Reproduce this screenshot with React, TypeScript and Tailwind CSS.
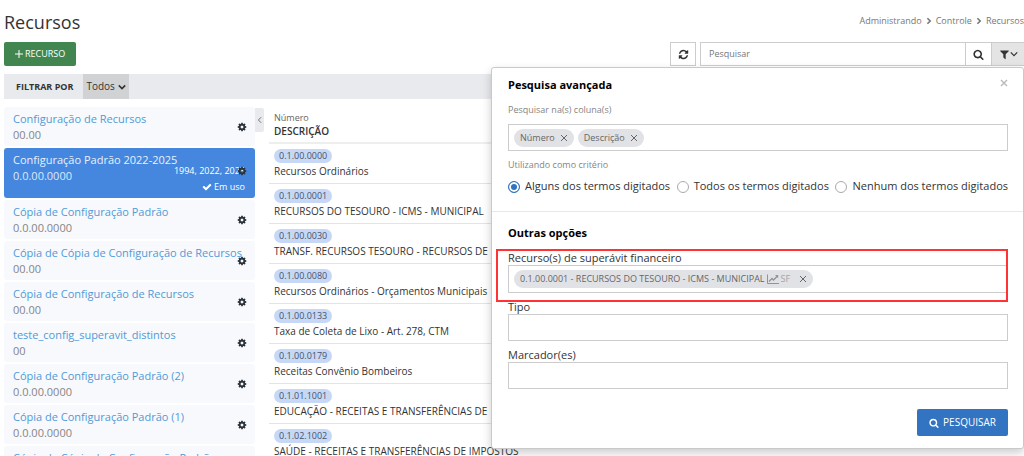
import { useState } from 'react';
import type { ReactNode } from 'react';
import { clsx } from 'clsx';

interface Config {
  name: string;
  mask: string;
  years?: string;
}

const CONFIGS: Config[] = [
  { name: 'Configuração de Recursos', mask: '00.00' },
  { name: 'Configuração Padrão 2022-2025', mask: '0.0.00.0000', years: '1994, 2022, 2023' },
  { name: 'Cópia de Configuração Padrão', mask: '0.0.00.0000' },
  { name: 'Cópia de Cópia de Configuração de Recursos', mask: '00.00' },
  { name: 'Cópia de Configuração de Recursos', mask: '00.00' },
  { name: 'teste_config_superavit_distintos', mask: '00' },
  { name: 'Cópia de Configuração Padrão (2)', mask: '0.0.00.0000' },
  { name: 'Cópia de Configuração Padrão (1)', mask: '0.0.00.0000' },
  { name: 'Cópia de Cópia de Configuração Padrão', mask: '0.0.00.0000' },
];

const RESOURCES = [
  { code: '0.1.00.0000', description: 'Recursos Ordinários' },
  { code: '0.1.00.0001', description: 'RECURSOS DO TESOURO - ICMS - MUNICIPAL' },
  { code: '0.1.00.0030', description: 'TRANSF. RECURSOS TESOURO - RECURSOS DE' },
  { code: '0.1.00.0080', description: 'Recursos Ordinários - Orçamentos Municipais' },
  { code: '0.1.00.0133', description: 'Taxa de Coleta de Lixo - Art. 278, CTM' },
  { code: '0.1.00.0179', description: 'Receitas Convênio Bombeiros' },
  { code: '0.1.01.1001', description: 'EDUCAÇÃO - RECEITAS E TRANSFERÊNCIAS DE' },
  { code: '0.1.02.1002', description: 'SAÚDE - RECEITAS E TRANSFERÊNCIAS DE IMPOSTOS' },
];

const CRITERIA = ['Alguns dos termos digitados', 'Todos os termos digitados', 'Nenhum dos termos digitados'];

const ICONS = {
  cog: 'M1152 896q0-106-75-181t-181-75-181 75-75 181 75 181 181 75 181-75 75-181zm512-109v222q0 12-8 23t-20 13l-185 28q-19 54-39 91 35 50 107 138 10 12 10 25t-9 23q-27 37-99 108t-94 71q-12 0-26-9l-138-108q-44 23-91 38-16 136-29 186-7 28-36 28h-222q-14 0-24.5-8.5t-11.5-21.5l-28-184q-49-16-90-37l-141 107q-10 9-25 9-14 0-25-11-126-114-165-168-7-10-7-23 0-12 8-23 15-21 51-66.5t54-70.5q-27-50-41-99l-183-27q-13-2-21-12.5t-8-23.5v-222q0-12 8-23t19-13l186-28q14-46 39-92-40-57-107-138-10-12-10-24 0-10 9-23 26-36 98.5-107.5t94.5-71.5q13 0 26 10l138 107q44-23 91-38 16-136 29-186 7-28 36-28h222q14 0 24.5 8.5t11.5 21.5l28 184q49 16 90 37l142-107q9-9 24-9 13 0 25 10 129 119 165 170 7 8 7 22 0 12-8 23-15 21-51 66.5t-54 70.5q26 50 41 98l183 28q13 2 21 12.5t8 23.5z',
  refresh:
    'M1639 1056q0 5-1 7-64 268-268 434.5t-478 166.5q-146 0-282.5-55t-243.5-157l-129 129q-19 19-45 19t-45-19-19-45v-448q0-26 19-45t45-19h448q26 0 45 19t19 45-19 45l-137 137q71 66 161 102t187 36q134 0 250-65t186-179q11-17 53-117 8-23 30-23h192q13 0 22.5 9.5t9.5 22.5zm25-800v448q0 26-19 45t-45 19h-448q-26 0-45-19t-19-45 19-45l138-138q-148-137-349-137-134 0-250 65t-186 179q-11 17-53 117-8 23-30 23h-199q-13 0-22.5-9.5t-9.5-22.5v-7q65-268 270-434.5t480-166.5q146 0 284 55.5t245 156.5l130-129q19-19 45-19t45 19 19 45z',
  search:
    'M1216 832q0-185-131.5-316.5t-316.5-131.5-316.5 131.5-131.5 316.5 131.5 316.5 316.5 131.5 316.5-131.5 131.5-316.5zm512 832q0 52-38 90t-90 38q-54 0-90-38l-343-342q-179 124-399 124-143 0-273.5-55.5t-225-150-150-225-55.5-273.5 55.5-273.5 150-225 225-150 273.5-55.5 273.5 55.5 225 150 150 225 55.5 273.5q0 220-124 399l343 343q37 37 37 90z',
  filter:
    'M1595 295q17 41-14 70l-493 493v742q0 42-39 59-13 5-25 5-27 0-45-19l-256-256q-19-19-19-45v-486l-493-493q-31-29-14-70 17-39 59-39h1280q42 0 59 39z',
  check:
    'M1671 566q0 40-28 68l-724 724-136 136q-28 28-68 28t-68-28l-136-136-362-362q-28-28-28-68t28-68l136-136q28-28 68-28t68 28l294 295 656-657q28-28 68-28t68 28l136 136q28 28 28 68z',
};

function Icon({ name, className }: { name: keyof typeof ICONS; className?: string }) {
  return (
    <svg viewBox="0 0 1792 1792" fill="currentColor" className={clsx('shrink-0', className)} aria-hidden="true">
      <path d={ICONS[name]} />
    </svg>
  );
}

function Chevron({ to, className }: { to: 'down' | 'left' | 'right'; className?: string }) {
  const paths = { down: 'M1 3l4 4 4-4', left: 'M6.5 1.5 3 5l3.5 3.5', right: 'M3 1.5 6.5 5 3 8.5' };
  return (
    <svg viewBox="0 0 10 10" fill="none" stroke="currentColor" className={clsx('shrink-0', className)} aria-hidden="true">
      <path d={paths[to]} />
    </svg>
  );
}

function Cross({ className }: { className?: string }) {
  return (
    <svg viewBox="0 0 8 8" fill="none" stroke="currentColor" className={clsx('size-2', className)} aria-hidden="true">
      <path d="M1 1l6 6M7 1 1 7" />
    </svg>
  );
}

function ChartIcon() {
  return (
    <svg viewBox="0 0 12 10" fill="none" stroke="currentColor" className="h-[10px] w-3 text-[#8f949b]" aria-hidden="true">
      <path d="M.5.5v9H12" />
      <path d="M2 7.5 5 4.5l1.5 1.5L10 2.5" strokeWidth="1.4" />
      <path d="M8 1h3.2v3.2z" fill="currentColor" stroke="none" />
    </svg>
  );
}

function ConfigItem({ config }: { config: Config }) {
  const active = Boolean(config.years);
  return (
    <li
      className={clsx(
        'relative rounded-[3px] px-[9px] pt-1',
        active ? 'h-[50px] bg-[#4587de] text-white' : 'h-[39px] bg-[#f7f9fd]'
      )}
    >
      <a href="#" className={clsx('block text-[11px] leading-4 whitespace-nowrap', active ? 'text-[#e8f0fc]' : 'text-[#5299d6]')}>
        {config.name}
      </a>
      <span className={clsx('block text-[11px] leading-4', active ? 'text-[#dce8fa]' : 'text-[#858585]')}>
        {config.mask}
      </span>
      {active && (
        <div className="absolute right-[10px] bottom-[3px] flex flex-col items-end text-[9px] leading-4">
          <span className="whitespace-nowrap">{config.years}</span>
          <span className="flex items-center gap-[2px]">
            <Icon name="check" className="size-[10px]" />
            Em uso
          </span>
        </div>
      )}
      <button
        type="button"
        aria-label="Opções"
        className={clsx('absolute right-2 text-[#2c333a]', active ? 'top-[18px]' : 'top-[15px]')}
      >
        <Icon name="cog" className="size-[10px]" />
      </button>
    </li>
  );
}

function Tag({ label, children }: { label: string; children?: ReactNode }) {
  return (
    <span className="flex h-[18px] items-center gap-[5px] rounded-full bg-[#e1e2e6] px-[6px] text-[9px] text-[#666]">
      <span className="flex items-center gap-[2px] whitespace-nowrap">
        {label}
        {children}
      </span>
      <button type="button" aria-label={`Remover ${label}`}>
        <Cross />
      </button>
    </span>
  );
}

function AdvancedSearch() {
  const [criterion, setCriterion] = useState(CRITERIA[0]);

  return (
    <section className="absolute top-[67px] right-0 w-[533px] rounded-[3px] border border-[#c9c9c9] bg-white pt-2 pb-3 text-[11px] text-[#333] shadow-[0_4px_10px_rgba(0,0,0,0.2)]">
      <div className="border-b border-[#e8e8e8] pr-[15px] pb-[17px] pl-4">
        <div className="flex items-center justify-between leading-[18px]">
          <h2 className="font-bold text-black">Pesquisa avançada</h2>
          <button type="button" aria-label="Fechar" className="-mt-1 text-[#bcbcbc]">
            <Cross className="stroke-[1.5]" />
          </button>
        </div>
        <p className="mt-2 text-[9px] leading-4 text-[#858585]">Pesquisar na(s) coluna(s)</p>
        <div className="mt-[6px] flex h-[27px] items-center gap-1 border border-[#ccc] px-[5px]">
          <Tag label="Número" />
          <Tag label="Descrição" />
        </div>
        <p className="mt-[6px] text-[9px] leading-4 text-[#858585]">Utilizando como critério</p>
        <div className="mt-[5px] flex justify-between leading-4 whitespace-nowrap">
          {CRITERIA.map((item) => (
            <label key={item} className="flex items-center gap-[5px]">
              <input
                type="radio"
                name="criterio"
                checked={criterion === item}
                onChange={() => setCriterion(item)}
                className="mt-[2px] size-3 appearance-none rounded-full border border-[#aaa] bg-white checked:border-[#2f74c0] checked:bg-[#2f74c0] checked:shadow-[inset_0_0_0_2px_white]"
              />
              {item}
            </label>
          ))}
        </div>
      </div>

      <div className="pt-3 pr-[15px] pl-4">
        <h2 className="leading-[18px] font-bold text-black">Outras opções</h2>
        <div className="relative mt-2">
          <p className="leading-[15px]">Recurso(s) de superávit financeiro</p>
          <div className="flex h-7 items-center border border-[#ccc] px-[5px]">
            <Tag label="0.1.00.0001 - RECURSOS DO TESOURO - ICMS - MUNICIPAL">
              <ChartIcon />
              <span className="mr-1 text-[#a5a5a5]">SF</span>
            </Tag>
          </div>
          {/* highlight frame */}
          <div className="pointer-events-none absolute -top-px right-0 -bottom-[9px] -left-3 border-2 border-[#f33]" />
        </div>
        <label htmlFor="tipo" className="mt-[7px] block leading-[14px]">
          Tipo
        </label>
        <input id="tipo" type="text" className="block h-[27px] w-full border border-[#ccc] px-2" />
        <label htmlFor="marcadores" className="mt-[7px] block leading-[14px]">
          Marcador(es)
        </label>
        <input id="marcadores" type="text" className="block h-[27px] w-full border border-[#ccc] px-2" />
        <button
          type="submit"
          className="mt-5 ml-auto flex h-[27px] items-center gap-1 rounded-[2px] bg-[#3274c1] px-3 text-[10px] text-white"
        >
          <Icon name="search" className="size-[10px]" />
          PESQUISAR
        </button>
      </div>
    </section>
  );
}

export default function App() {
  return (
    <div className="relative h-screen overflow-hidden bg-white pl-1 font-['Open_Sans','Noto_Sans',sans-serif] text-[11px] text-[#333]">
      <header className="flex items-center justify-between pt-2">
        <h1 className="text-[18px] leading-7">Recursos</h1>
        <nav className="-mt-[3px] flex items-center gap-[3px] text-[9px] text-[#777]">
          <a href="#">Administrando</a>
          <Chevron to="right" className="size-2 stroke-2" />
          <a href="#">Controle</a>
          <Chevron to="right" className="size-2 stroke-2" />
          <a href="#">Recursos</a>
        </nav>
      </header>

      <div className="mt-[6px] flex items-center justify-between">
        <button type="button" className="flex h-6 items-center gap-[2px] rounded-[2px] bg-[#41864f] px-[11px] text-[9px] text-white">
          <svg viewBox="0 0 8 8" stroke="currentColor" className="size-2" aria-hidden="true">
            <path d="M4 0v8M0 4h8" />
          </svg>
          RECURSO
        </button>
        <div className="flex h-6">
          <button type="button" aria-label="Atualizar" className="mr-1 flex w-[26px] items-center justify-center border border-[#ccc]">
            <Icon name="refresh" className="size-[11px]" />
          </button>
          <input
            type="search"
            aria-label="Pesquisar"
            placeholder="Pesquisar"
            className="w-[266px] border border-[#ccc] px-2 text-[9px] placeholder:text-[#777]"
          />
          <button type="button" aria-label="Buscar" className="flex w-[25px] items-center justify-center border-y border-[#ccc]">
            <Icon name="search" className="size-[11px]" />
          </button>
          <button
            type="button"
            aria-label="Filtros"
            className="flex w-[33px] items-center justify-center border border-r-0 border-[#ccc] bg-[#e4e4e4]"
          >
            <Icon name="filter" className="size-[11px]" />
            <Chevron to="down" className="size-2 stroke-[1.5]" />
          </button>
        </div>
      </div>

      <div className="mt-2 flex h-[25px] items-center bg-[#e9eaee] pl-3">
        <span className="text-[9px] font-bold">FILTRAR POR</span>
        <button type="button" className="ml-[10px] flex h-full items-center gap-[3px] bg-[#d1d2d4] px-[3px] text-[10px]">
          Todos
          <Chevron to="down" className="size-2 stroke-2" />
        </button>
      </div>

      <main className="mt-2 flex">
        <ul className="flex w-[251px] shrink-0 flex-col gap-[2px]">
          {CONFIGS.map((config) => (
            <ConfigItem key={config.name} config={config} />
          ))}
        </ul>
        <button
          type="button"
          aria-label="Recolher painel"
          className="mt-px flex h-6 w-[9px] shrink-0 items-center justify-center rounded-r-[2px] bg-[#e9eaee] text-[#555]"
        >
          <Chevron to="left" className="size-2" />
        </button>
        <table className="ml-[5px] flex-1 border-collapse self-start text-left text-[10px]">
          <thead>
            <tr className="h-9 border-b-2 border-[#eee]">
              <th className="px-[5px] pt-1 align-top font-normal">
                <span className="block text-[9px] leading-[14px] text-[#666]">Número</span>
                <span className="block leading-3 font-semibold">DESCRIÇÃO</span>
              </th>
            </tr>
          </thead>
          <tbody>
            {RESOURCES.map((resource) => (
              <tr key={resource.code} className="h-10 border-b border-[#e4e4e4]">
                <td className="px-[5px] pt-[5px] align-top whitespace-nowrap">
                  <span className="block w-fit rounded-full bg-[#c6d8f5] px-[5px] text-[9px] leading-[14px] text-[#44546c]">
                    {resource.code}
                  </span>
                  <span className="block leading-4">{resource.description}</span>
                </td>
              </tr>
            ))}
          </tbody>
        </table>
      </main>

      <AdvancedSearch />
    </div>
  );
}
